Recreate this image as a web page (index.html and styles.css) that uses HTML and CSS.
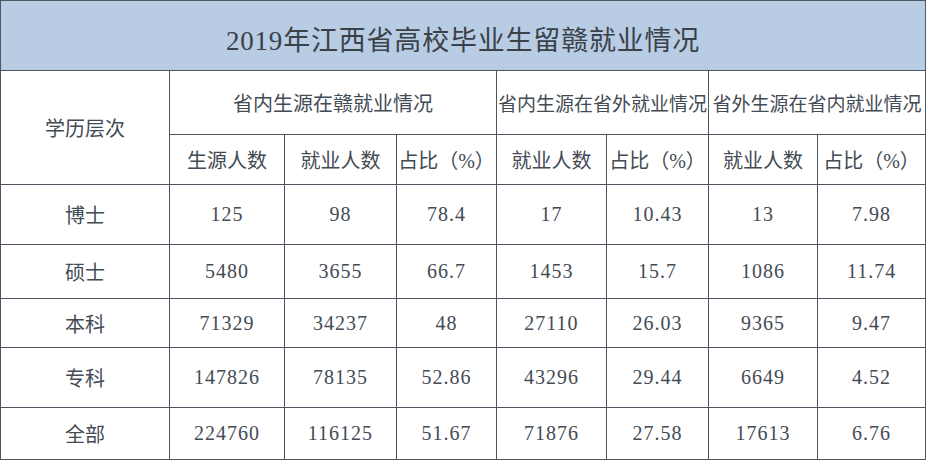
FILE: index.html
```html
<!DOCTYPE html>
<html lang="zh-CN">
<head>
<meta charset="utf-8">
<title>2019年江西省高校毕业生留赣就业情况</title>
<link rel="stylesheet" href="styles.css">
</head>
<body>
<table class="grid">
  <colgroup>
    <col class="c0"><col class="c1"><col class="c2"><col class="c3"><col class="c4"><col class="c5"><col class="c6"><col class="c7">
  </colgroup>
  <thead>
    <tr class="r-title"><th colspan="8" class="title">2019年江西省高校毕业生留赣就业情况</th></tr>
    <tr class="r-h1">
      <th rowspan="2">学历层次</th>
      <th colspan="3">省内生源在赣就业情况</th>
      <th colspan="2" class="wide">省内生源在省外就业情况</th>
      <th colspan="2" class="wide">省外生源在省内就业情况</th>
    </tr>
    <tr class="r-h2">
      <th>生源人数</th><th>就业人数</th><th>占比（%）</th>
      <th>就业人数</th><th>占比（%）</th>
      <th>就业人数</th><th>占比（%）</th>
    </tr>
  </thead>
  <tbody>
    <tr class="r1"><th>博士</th><td>125</td><td>98</td><td>78.4</td><td>17</td><td>10.43</td><td>13</td><td>7.98</td></tr>
    <tr class="r2"><th>硕士</th><td>5480</td><td>3655</td><td>66.7</td><td>1453</td><td>15.7</td><td>1086</td><td>11.74</td></tr>
    <tr class="r3"><th>本科</th><td>71329</td><td>34237</td><td>48</td><td>27110</td><td>26.03</td><td>9365</td><td>9.47</td></tr>
    <tr class="r4"><th>专科</th><td>147826</td><td>78135</td><td>52.86</td><td>43296</td><td>29.44</td><td>6649</td><td>4.52</td></tr>
    <tr class="r5"><th>全部</th><td>224760</td><td>116125</td><td>51.67</td><td>71876</td><td>27.58</td><td>17613</td><td>6.76</td></tr>
  </tbody>
</table>
</body>
</html>
```
FILE: styles.css
```css
html, body {
  margin: 0;
  padding: 0;
  background: #ffffff;
}

.grid {
  border-collapse: collapse;
  table-layout: fixed;
  width: 925px;
  font-family: "Liberation Serif", "Noto Sans CJK SC", serif;
  color: #434b54;
}

.c0 { width: 169px; }
.c1 { width: 115px; }
.c2 { width: 112px; }
.c3 { width: 100px; }
.c4 { width: 110px; }
.c5 { width: 102px; }
.c6 { width: 109px; }
.c7 { width: 108px; }

.grid th,
.grid td {
  border: 1px solid #4d5761;
  padding: 0;
  text-align: center;
  vertical-align: middle;
  font-weight: 400;
  font-size: 20px;
  white-space: nowrap;
  overflow: hidden;
}

.grid td {
  letter-spacing: 1px;
}

.grid .title {
  background: #b8cce4;
  font-size: 27px;
  letter-spacing: 0.8px;
  color: #3a4148;
  padding-top: 5px;
}

.grid .wide {
  font-size: 19px;
  letter-spacing: 0;
}

.r-title { height: 70px; }
.r-h1 { height: 64px; }
.r-h2 { height: 50px; }
.r1 { height: 60px; }
.r2 { height: 54px; }
.r3 { height: 49px; }
.r4 { height: 60px; }
.r5 { height: 52px; }
```
